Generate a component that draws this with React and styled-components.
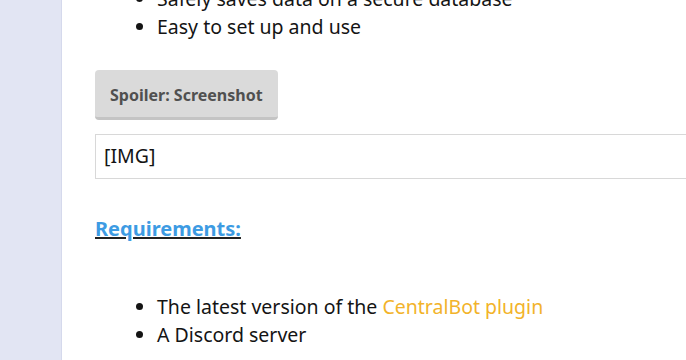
import React from 'react';
import styled, { createGlobalStyle } from 'styled-components';

const GlobalStyle = createGlobalStyle`
  html, body {
    margin: 0;
    padding: 0;
    background: #fff;
    overflow: hidden;
  }
  body {
    font-family: "Noto Sans", "Open Sans", "DejaVu Sans", sans-serif;
    color: #141414;
  }
`;

const Page = styled.div`
  display: flex;
  height: 360px;
  overflow: hidden;
`;

const Sidebar = styled.div`
  flex: 0 0 61px;
  background-color: #e2e5f3;
  border-right: 1px solid #d5d9ec;
`;

const Content = styled.div`
  flex: 0 0 720px;
  padding-left: 33px;
  font-size: 19.5px;
  line-height: 28px;
`;

const List = styled.ul`
  margin: ${p => p.$top || '0'} 0 0 0;
  padding-left: 62px;
  list-style: disc;
`;

const Item = styled.li`
  padding-left: 0;
`;

const SpoilerButton = styled.button`
  display: block;
  margin-top: 29px;
  padding: 15px 15px 12px;
  font-family: inherit;
  font-size: 16px;
  font-weight: 700;
  line-height: 20px;
  color: #505050;
  background-color: #dadada;
  border: none;
  border-bottom: 3px solid #c4c4c4;
  border-radius: 4px;
  cursor: pointer;
`;

const SpoilerBox = styled.div`
  margin-top: 14px;
  padding: 7px 8px 8px;
  border: 1px solid #d8d8d8;
  color: #141414;
`;

const Heading = styled.div`
  margin-top: 36px;
  font-size: 20px;
  font-weight: 700;
  text-decoration: underline;
  text-decoration-color: #222;
`;

const BlueText = styled.span`
  color: #3d9be3;
`;

const PluginLink = styled.a`
  color: #f2b32a;
  text-decoration: none;
`;

function App() {
  return (
    <>
      <GlobalStyle />
      <Page>
        <Sidebar />
        <Content>
          <List $top="-15px">
            <Item>Safely saves data on a secure database</Item>
            <Item>Easy to set up and use</Item>
          </List>
          <SpoilerButton type="button">Spoiler: Screenshot</SpoilerButton>
          <SpoilerBox>[IMG]</SpoilerBox>
          <Heading>
            <BlueText>Requirements:</BlueText>
          </Heading>
          <List $top="50px">
            <Item>
              The latest version of the <PluginLink href="#">CentralBot plugin</PluginLink>
            </Item>
            <Item>A Discord server</Item>
          </List>
        </Content>
      </Page>
    </>
  );
}

export default App;
